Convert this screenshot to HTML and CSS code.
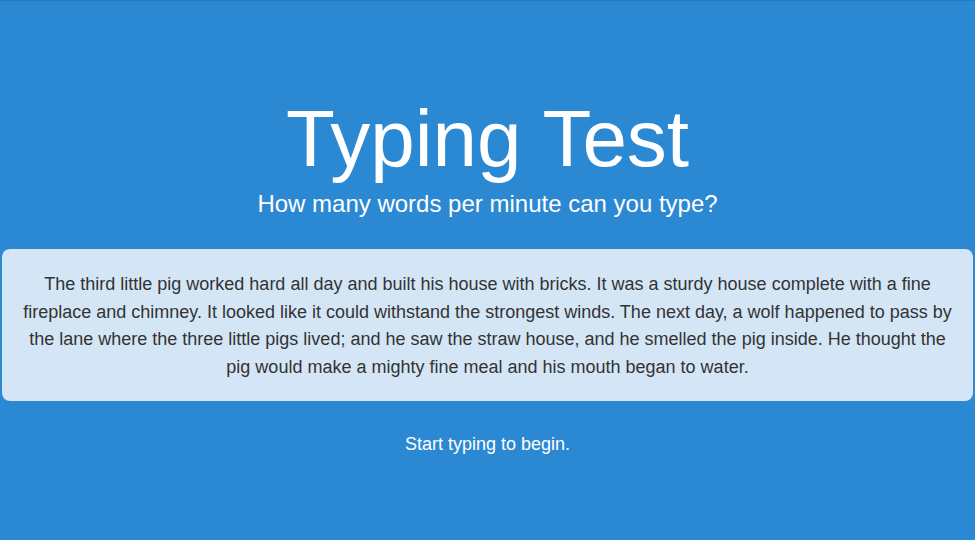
FILE: index.html
```html
<!DOCTYPE html>
<html>
<head>
<meta charset="utf-8">
<link rel="stylesheet" href="styles.css">
</head>
<body>
<main class="app">
  <header class="head">
    <h1 class="title">Typing Test</h1>
    <p class="subtitle">How many words per minute can you type?</p>
  </header>
  <div class="passage">
    <p>The third little pig worked hard all day and built his house with bricks. It was a sturdy house complete with a fine fireplace and chimney. It looked like it could withstand the strongest winds. The next day, a wolf happened to pass by the lane where the three little pigs lived; and he saw the straw house, and he smelled the pig inside. He thought the pig would make a mighty fine meal and his mouth began to water.</p>
  </div>
  <p class="status">Start typing to begin.</p>
</main>
</body>
</html>
```

FILE: styles.css
```css
html, body {
  margin: 0;
  padding: 0;
  height: 100%;
}
body {
  background: #2b88d3;
  border-top: 1px solid #2a76b8;
  box-sizing: border-box;
  font-family: "Liberation Sans", Arial, sans-serif;
  color: #fff;
}
.app {
  display: flex;
  flex-direction: column;
  align-items: center;
  padding: 92px 2px 0 2px;
}
.head {
  text-align: center;
}
.title {
  margin: 0;
  font-size: 80px;
  font-weight: 400;
  line-height: 92px;
}
.subtitle {
  margin: 5px 0 0;
  font-size: 24px;
  line-height: 28px;
}
.passage {
  align-self: stretch;
  margin-top: 31px;
  background: #d4e6f6;
  border-radius: 8px;
  padding: 22px 20px 19px;
  text-align: center;
  color: #333;
}
.passage p {
  margin: 0;
  font-size: 18px;
  line-height: 27.7px;
}
.status {
  margin: 33px 0 0;
  font-size: 18px;
  line-height: 20px;
}
```
